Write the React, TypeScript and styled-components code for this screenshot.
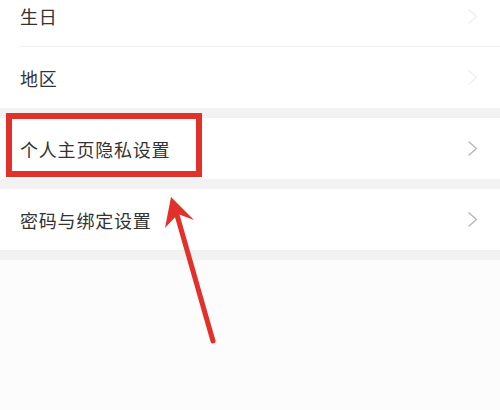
import React from 'react';
import styled, { createGlobalStyle } from 'styled-components';

const GlobalStyle = createGlobalStyle`
  html, body {
    margin: 0;
    padding: 0;
    background: #fcfcfc;
  }
  body {
    font-family: "Noto Sans CJK SC", "Noto Sans", sans-serif;
  }
`;

const Page = styled.div`
  position: relative;
  width: 500px;
  height: 410px;
  overflow: hidden;
  background: #fcfcfc;
`;

const List = styled.div`
  margin-top: -14px;
  display: flex;
  flex-direction: column;
`;

const Group = styled.div`
  background: #ffffff;
  border-bottom: 10px solid #f2f2f2;
`;

const Row = styled.div<{ $divider?: boolean }>`
  display: flex;
  align-items: center;
  justify-content: space-between;
  height: 61px;
  margin-left: 20px;
  padding-right: 22px;
  box-sizing: border-box;
  border-bottom: ${(p) => (p.$divider ? '1px solid #f2f2f2' : 'none')};
`;

const Label = styled.span`
  font-size: 18px;
  color: #333333;
  letter-spacing: 0.8px;
`;

const Chevron = styled.svg<{ $faint?: boolean }>`
  width: 11px;
  height: 17px;
  stroke: ${(p) => (p.$faint ? '#efefef' : '#b8b8b8')};
  fill: none;
  stroke-width: 1.4;
`;

// annotation drawn over the list
const Highlight = styled.div`
  position: absolute;
  left: 6px;
  top: 113px;
  width: 184px;
  height: 52px;
  border: 6px solid #e2312b;
`;

const Arrow = styled.svg`
  position: absolute;
  left: 0;
  top: 0;
  width: 500px;
  height: 410px;
  pointer-events: none;
`;

const groups = [
  { labels: ['生日', '地区'], faint: true },
  { labels: ['个人主页隐私设置'], faint: false },
  { labels: ['密码与绑定设置'], faint: false },
];

export default function App() {
  return (
    <Page>
      <GlobalStyle />
      <List>
        {groups.map((g, gi) => (
          <Group key={gi}>
            {g.labels.map((label, i) => (
              <Row key={label} $divider={i < g.labels.length - 1}>
                <Label>{label}</Label>
                <Chevron $faint={g.faint} viewBox="0 0 11 17">
                  <path d="M1.5 1.5 L9.5 8.5 L1.5 15.5" />
                </Chevron>
              </Row>
            ))}
          </Group>
        ))}
      </List>
      <Highlight />
      <Arrow viewBox="0 0 500 410">
        <path
          d="M213 341 L175 208"
          stroke="#e2312b"
          strokeWidth="5"
          strokeLinecap="round"
          fill="none"
        />
        <path d="M171 197 L194 220 L178 214 L165 228 Z" fill="#e2312b" />
      </Arrow>
    </Page>
  );
}
